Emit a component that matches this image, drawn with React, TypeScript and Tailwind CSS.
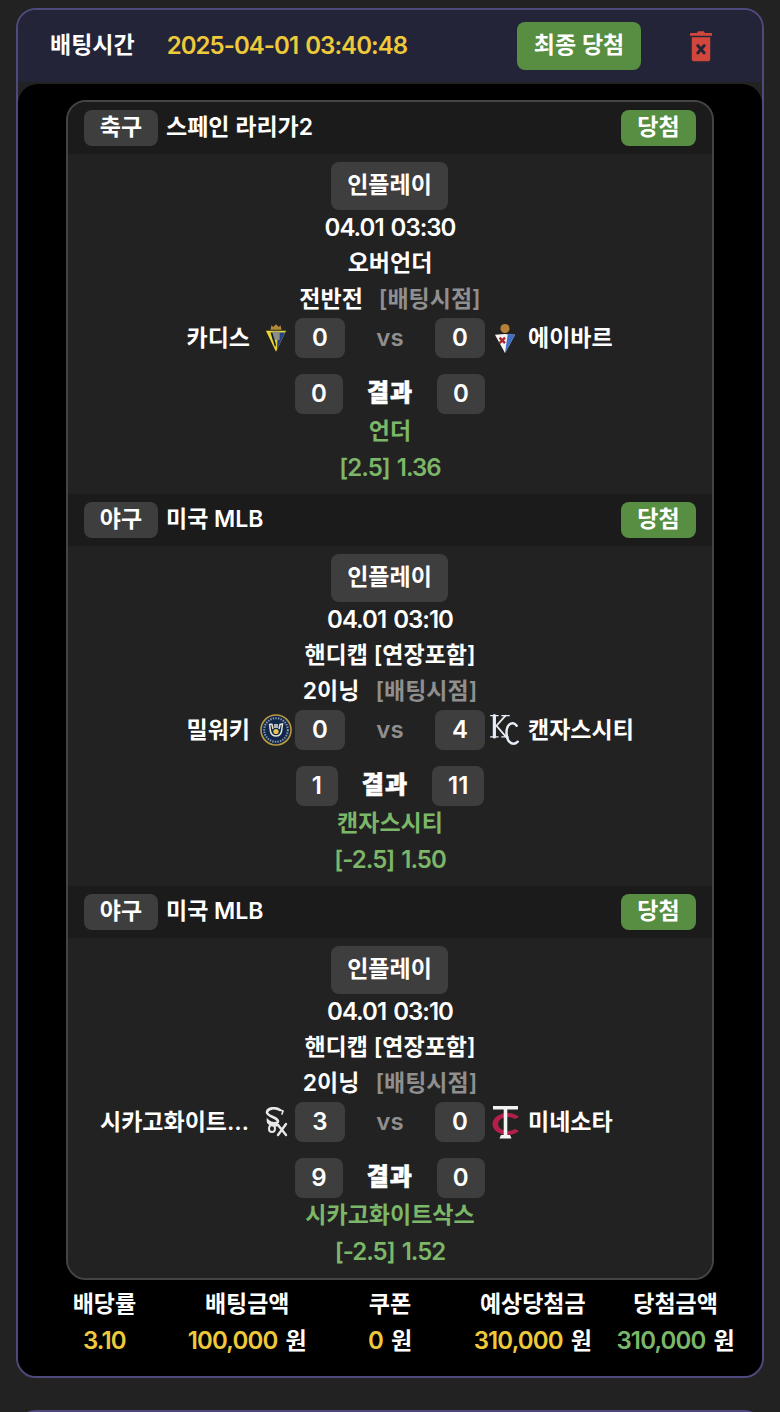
import type { ReactNode } from "react";

const FONT = "font-['Inter','Noto_Sans_CJK_KR',sans-serif]";

// team crests, drawn small
const Cadiz = () => (
  <svg width="22" height="32" viewBox="2 0 24 32">
    <path d="M9 2l2 2 3-3 3 3 2-2 1 5H8z" fill="#b08a3a" />
    <path d="M3 8h22L14 31z" fill="#e8d52f" />
    <path d="M16 10h8L15 29z" fill="#27408b" />
    <rect x="10" y="9" width="8" height="9" fill="#8a8f80" />
    <path d="M8 10h2l4 13-1 3z" fill="#111a33" />
  </svg>
);

const Eibar = () => (
  <svg width="24" height="31" viewBox="0 0 26 34">
    <circle cx="13" cy="6" r="5" fill="#b5813a" />
    <path d="M2 13l11-1 11 1-11 20z" fill="#f4f4f6" />
    <path d="M16 12l8 1-11 20z" fill="#3f6fc4" />
    <path d="M7 16l6 6M13 16l-6 6" stroke="#a8272f" strokeWidth="2.6" />
  </svg>
);

const Brewers = () => (
  <svg width="32" height="32" viewBox="0 0 32 32">
    <circle cx="16" cy="16" r="15" fill="#11284b" stroke="#b99a3e" strokeWidth="1.6" />
    <circle cx="16" cy="16" r="11.800" fill="none" stroke="#8d9ab0" strokeWidth="2" strokeDasharray="1.4 1.2" />
    <circle cx="16" cy="16" r="9" fill="#11284b" />
    <path
      d="M9.500 10l1 7.500c.8 3 3 4.500 5.500 4.500s4.700-1.500 5.500-4.500l1-7.500-2.500.5-1 4.500M9.500 10l2.500.5 1 4.500M15 10v4M17 10v4"
      fill="none"
      stroke="#e6e3d4"
      strokeWidth="1.500"
    />
    <circle cx="16" cy="17.500" r="2.600" fill="#e8c64a" />
  </svg>
);

const Royals = () => (
  <svg width="32" height="34" viewBox="0 0 30 32" fill="none" stroke="#e6edf6" strokeLinecap="round">
    <path d="M5 2.500v20" strokeWidth="3" />
    <path d="M1.500 2.500h7M1.500 22.500h7" strokeWidth="1.200" />
    <path d="M15.500 2.500L7 12l9 10.500" strokeWidth="1.700" />
    <path d="M12 2.500h7M12 22.500h6" strokeWidth="1.200" />
    <path d="M26 12c-2-3-5-3-7-1-3.500 3-3.500 12 0 16 2 2 5 3 8 0" strokeWidth="2.300" />
  </svg>
);

const WhiteSox = () => (
  <svg width="24" height="30" viewBox="0 0 24 30" fill="none" stroke="#e8e8e8" strokeLinecap="round">
    <path d="M16 3C11 0 4 1 3 5c-1 4 10 5 11 9 .5 3-7 3-10 0 0 3 5 5 10 4" strokeWidth="2.600" />
    <path d="M16 3l3 1-1 3" strokeWidth="1.600" />
    <path d="M8 18c-4 .5-4 7 0 7s4-7 0-7z" strokeWidth="2" />
    <path d="M14 18l8 10M22 17l-8 11" strokeWidth="2.400" />
  </svg>
);

const Twins = () => (
  <svg width="32" height="36" viewBox="0 0 32 36">
    <path d="M30 13A15 11 0 1 0 30 27L26 25A10 7 0 1 1 26 15Z" fill="#b31f4a" />
    <path d="M4 2h25v3.500H4z" fill="#f2f2f2" />
    <path d="M14.700 2h3.600v29h-3.600z" fill="#f2f2f2" />
    <path d="M12 31h9l1.500 3.500h-12z" fill="#f2f2f2" />
  </svg>
);

const TrashIcon = () => (
  <svg width="24" height="32" viewBox="0 0 26 34">
    <path d="M9 2.500c0-1 1-1.500 1.500-1.500h5c.5 0 1.500.5 1.500 1.500V3h7c.6 0 1 .4 1 1v2H1V4c0-.6.4-1 1-1h7z" fill="#d2473b" />
    <path d="M3 7.500h20V31c0 1.500-1 2.500-2.500 2.500h-15C4 33.500 3 32.500 3 31z" fill="#d2473b" />
    <path d="M9.500 16.500l7 8M16.500 16.500l-7 8" stroke="#232438" strokeWidth="3.200" strokeLinecap="round" />
  </svg>
);

const ScoreBox = ({ children }: { children: ReactNode }) => (
  <div className="flex h-10 w-[50px] items-center justify-center rounded-lg bg-[#3e3e3e] text-[24px] font-semibold text-white">
    {children}
  </div>
);

const ResultBox = ({ children }: { children: ReactNode }) => (
  <div className="flex h-10 items-center justify-center rounded-lg bg-[#3e3e3e] px-4 text-[24px] font-semibold text-white">
    {children}
  </div>
);

interface Match {
  sport: string;
  league: string;
  time: string;
  market: string;
  period: string;
  home: string;
  homeLogo: ReactNode;
  homeScore: number;
  away: string;
  awayLogo: ReactNode;
  awayScore: number;
  homeFinal: number;
  awayFinal: number;
  pick: string;
  odds: string;
}

const matches: Match[] = [
  {
    sport: "축구",
    league: "스페인 라리가2",
    time: "04.01 03:30",
    market: "오버언더",
    period: "전반전",
    home: "카디스",
    homeLogo: <Cadiz />,
    homeScore: 0,
    away: "에이바르",
    awayLogo: <Eibar />,
    awayScore: 0,
    homeFinal: 0,
    awayFinal: 0,
    pick: "언더",
    odds: "[2.5] 1.36",
  },
  {
    sport: "야구",
    league: "미국 MLB",
    time: "04.01 03:10",
    market: "핸디캡 [연장포함]",
    period: "2이닝",
    home: "밀워키",
    homeLogo: <Brewers />,
    homeScore: 0,
    away: "캔자스시티",
    awayLogo: <Royals />,
    awayScore: 4,
    homeFinal: 1,
    awayFinal: 11,
    pick: "캔자스시티",
    odds: "[-2.5] 1.50",
  },
  {
    sport: "야구",
    league: "미국 MLB",
    time: "04.01 03:10",
    market: "핸디캡 [연장포함]",
    period: "2이닝",
    home: "시카고화이트삭스",
    homeLogo: <WhiteSox />,
    homeScore: 3,
    away: "미네소타",
    awayLogo: <Twins />,
    awayScore: 0,
    homeFinal: 9,
    awayFinal: 0,
    pick: "시카고화이트삭스",
    odds: "[-2.5] 1.52",
  },
];

const MatchSection = ({ match }: { match: Match }) => (
  <section>
    {/* league bar */}
    <div className="flex h-[52px] items-center justify-between bg-[#1b1b1b] pl-4 pr-4">
      <div className="flex items-center gap-2">
        <span className="flex h-9 w-[74px] items-center justify-center rounded-lg bg-[#3e3e3e] pb-0.5 text-[23px] font-semibold text-white">
          {match.sport}
        </span>
        <span className="pb-0.5 text-[23px] font-semibold text-white">{match.league}</span>
      </div>
      <span className="flex h-9 w-[75px] items-center justify-center rounded-lg bg-[#578e41] pb-0.5 text-[23px] font-semibold text-white">
        당첨
      </span>
    </div>

    <div className="flex flex-col items-center bg-[#222222] pb-2 pt-2">
      <span className="mr-px flex h-12 w-[117px] items-center justify-center rounded-lg bg-[#3e3e3e] pb-0.5 text-[23px] font-semibold text-white">
        인플레이
      </span>
      <div className="flex h-9 items-center text-[24px] font-semibold tracking-[-1px] [word-spacing:2px] text-white">{match.time}</div>
      <div className="flex h-9 items-center pb-0.5 text-[23px] font-semibold text-white">{match.market}</div>
      <div className="flex h-9 items-center gap-4 pb-0.5 text-[23px] font-semibold text-white">
        <span>{match.period}</span>
        <span className="text-[#8f8f8f]">[배팅시점]</span>
      </div>

      {/* team row */}
      <div className="grid h-10 w-full grid-cols-[minmax(0,1fr)_50px_90px_50px_minmax(0,1fr)] items-center">
        <div className="flex min-w-0 items-center justify-end">
          <span className="max-w-[150px] truncate text-[23px] font-semibold text-white">{match.home}</span>
          <span className="ml-[7px] flex w-[38px] shrink-0 justify-center">{match.homeLogo}</span>
        </div>
        <ScoreBox>{match.homeScore}</ScoreBox>
        <span className="text-center text-[24px] font-semibold text-[#8f8f8f]">vs</span>
        <ScoreBox>{match.awayScore}</ScoreBox>
        <div className="flex min-w-0 items-center">
          <span className="mr-[3px] flex w-[40px] shrink-0 justify-center">{match.awayLogo}</span>
          <span className="truncate text-[23px] font-semibold text-white">{match.away}</span>
        </div>
      </div>

      {/* final score */}
      <div className="mt-4 flex h-10 items-center justify-center gap-6">
        <ResultBox>{match.homeFinal}</ResultBox>
        <span className="pb-0.5 text-[24px] font-black tracking-[1px] text-white [-webkit-text-stroke:0.6px_white]">결과</span>
        <ResultBox>{match.awayFinal}</ResultBox>
      </div>

      <div className="flex h-9 items-center pb-0.5 text-[23px] font-semibold text-[#7cb668]">{match.pick}</div>
      <div className="flex h-9 items-center text-[24px] font-semibold tracking-[-1px] [word-spacing:2px] text-[#7cb668]">{match.odds}</div>
    </div>
  </section>
);

const summary = [
  { label: "배당률", value: "3.10", color: "text-[#eec93a]", unit: false },
  { label: "배팅금액", value: "100,000", color: "text-[#eec93a]", unit: true },
  { label: "쿠폰", value: "0", color: "text-[#eec93a]", unit: true },
  { label: "예상당첨금", value: "310,000", color: "text-[#eec93a]", unit: true },
  { label: "당첨금액", value: "310,000", color: "text-[#7cb668]", unit: true },
];

export default function App() {
  return (
    <div className={`h-[1412px] overflow-hidden bg-[#222222] px-4 pt-2 ${FONT}`}>
      <div className="overflow-hidden rounded-[20px] border-2 border-[#4f4a7d] bg-[#222222]">
        {/* bet time header */}
        <div className="flex h-[72px] items-center bg-[#232438] pl-8 pr-[49px]">
          <span className="pb-0.5 text-[23px] font-semibold text-white">배팅시간</span>
          <span className="ml-[32px] text-[24px] font-semibold tracking-[-0.95px] [word-spacing:2px] text-[#eec93a]">2025-04-01 03:40:48</span>
          <button className="ml-auto flex h-12 w-[124px] items-center justify-center rounded-lg bg-[#578e41] pb-0.5 text-[23px] font-semibold text-white">
            최종 당첨
          </button>
          <span className="ml-[48px] flex">
            <TrashIcon />
          </span>
        </div>

        <div className="mt-0.5 rounded-t-[20px] bg-black pb-4 pt-4">
          <div className="mx-[48px] overflow-hidden rounded-[20px] border-2 border-[#444444] bg-[#222222]">
            {matches.map((match, i) => (
              <MatchSection key={i} match={match} />
            ))}
          </div>

          {/* totals */}
          <div className="mt-[6px] grid grid-cols-5 px-[15px]">
            {summary.map((item) => (
              <div key={item.label} className="flex flex-col items-center">
                <div className="flex h-9 items-center text-[23px] font-semibold text-white">{item.label}</div>
                <div className="flex h-[38px] items-center gap-2 text-[24px] font-semibold text-white">
                  <span className={`tracking-[-0.85px] ${item.color}`}>{item.value}</span>
                  {item.unit && <span className="text-[23px]">원</span>}
                </div>
              </div>
            ))}
          </div>
        </div>
      </div>

      {/* next bet card, cut off by the viewport */}
      <div className="mt-8 h-10 rounded-t-[20px] border-2 border-[#4f4a7d] bg-[#232438]" />
    </div>
  );
}
